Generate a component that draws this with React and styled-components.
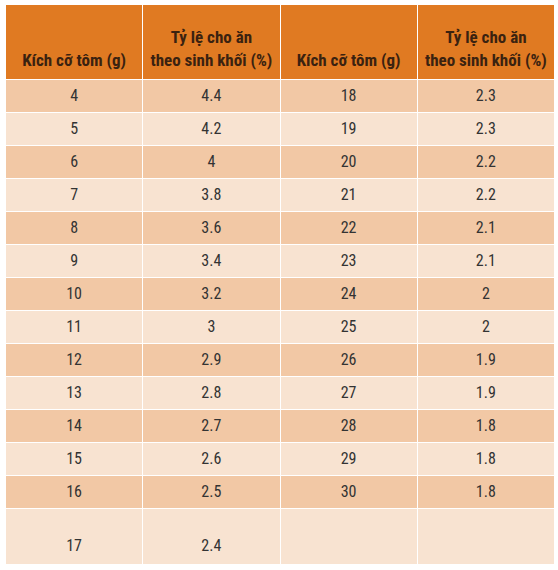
import React from 'react';
import styled, { createGlobalStyle } from 'styled-components';

const GlobalStyle = createGlobalStyle`
  body {
    margin: 0;
    background: #ffffff;
    font-family: "Roboto Condensed", "Liberation Sans Narrow", Roboto, sans-serif;
  }
`;

const Page = styled.div`
  padding: 5px 3px 5px 5px;
`;

const Table = styled.table`
  width: 550px;
  border-collapse: collapse;
  table-layout: fixed;
  font-stretch: condensed;
`;

const HeadCell = styled.th`
  height: 67px;
  padding: 0 2px 7px;
  background: #e07a22;
  color: #3a2210;
  font-size: 17px;
  font-weight: 700;
  line-height: 23px;
  vertical-align: bottom;
  text-align: center;
  border: 1px solid #ffffff;
  border-top: 0;
`;

const Row = styled.tr`
  background: ${p => (p.$dark ? '#f2c8a5' : '#f8e3d1')};
`;

const Cell = styled.td`
  height: ${p => (p.$tall ? '37px' : '30px')};
  padding: ${p => (p.$tall ? '18px 4px 0' : '0 4px 2px')};
  color: #333333;
  font-size: 16px;
  text-align: center;
  vertical-align: middle;
  border: 1px solid #ffffff;
`;

const rows = [
  ['4', '4.4', '18', '2.3'],
  ['5', '4.2', '19', '2.3'],
  ['6', '4', '20', '2.2'],
  ['7', '3.8', '21', '2.2'],
  ['8', '3.6', '22', '2.1'],
  ['9', '3.4', '23', '2.1'],
  ['10', '3.2', '24', '2'],
  ['11', '3', '25', '2'],
  ['12', '2.9', '26', '1.9'],
  ['13', '2.8', '27', '1.9'],
  ['14', '2.7', '28', '1.8'],
  ['15', '2.6', '29', '1.8'],
  ['16', '2.5', '30', '1.8'],
  ['17', '2.4', '', ''],
];

export default function App() {
  return (
    <Page>
      <GlobalStyle />
      <Table>
        <thead>
          <tr>
            <HeadCell>Kích cỡ tôm (g)</HeadCell>
            <HeadCell>Tỷ lệ cho ăn<br />theo sinh khối (%)</HeadCell>
            <HeadCell>Kích cỡ tôm (g)</HeadCell>
            <HeadCell>Tỷ lệ cho ăn<br />theo sinh khối (%)</HeadCell>
          </tr>
        </thead>
        <tbody>
          {rows.map((r, i) => (
            <Row key={i} $dark={i % 2 === 0}>
              {r.map((v, j) => (
                <Cell key={j} $tall={i === rows.length - 1}>{v}</Cell>
              ))}
            </Row>
          ))}
        </tbody>
      </Table>
    </Page>
  );
}
